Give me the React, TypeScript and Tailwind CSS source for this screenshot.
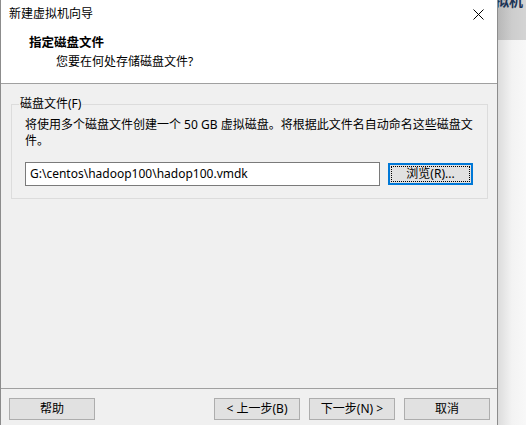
import React from "react";

const font = { fontFamily: '"Noto Sans", "Noto Sans CJK SC", sans-serif' };

function Btn({ children, className = "" }: { children: React.ReactNode; className?: string }) {
  return (
    <div
      className={
        "w-[86px] h-[22px] border border-[#adadad] bg-[#e1e1e1] flex items-center justify-center text-[12px] leading-[14px] text-black " +
        className
      }
    >
      {children}
    </div>
  );
}

export default function App() {
  return (
    <div className="w-[526px] h-[425px] flex overflow-hidden bg-white" style={font}>
      {/* dialog */}
      <div className="w-[498px] h-[425px] flex flex-col border-l border-r border-[#8c8c8c] bg-[#f0f0f0] shrink-0">
        {/* title bar */}
        <div className="h-[28px] bg-white flex items-center justify-between pl-[8px] pr-[12px]">
          <span className="text-[12px] leading-[14px] text-black">新建虚拟机向导</span>
          <svg width="11" height="11" viewBox="0 0 11 11" className="mr-[1px]">
            <path d="M0.5 0.5 L10.5 10.5 M10.5 0.5 L0.5 10.5" stroke="#000" strokeWidth="1" />
          </svg>
        </div>
        {/* header */}
        <div className="h-[56px] bg-white border-b border-[#a0a0a0] flex flex-col pt-[7px]">
          <div className="pl-[28px] text-[12.5px] leading-[16px] font-bold text-black">指定磁盘文件</div>
          <div className="pl-[55px] mt-[3px] text-[12px] leading-[16px] text-black">您要在何处存储磁盘文件?</div>
        </div>
        {/* body */}
        <div className="flex-1 flex flex-col">
          <div className="relative mt-[20px] ml-[10px] w-[477px] h-[95px] border border-[#dcdcdc] pl-[13px] pt-[12px]">
            <span className="absolute left-[7px] top-[-8px] bg-[#f0f0f0] px-[1px] text-[12px] leading-[14px] text-black">
              磁盘文件(F)
            </span>
            <div className="text-[12px] leading-[16px] text-black whitespace-nowrap">
              将使用多个磁盘文件创建一个 50 GB 虚拟磁盘。将根据此文件名自动命名这些磁盘文
              <br />
              件。
            </div>
            <div className="flex items-center mt-[13px]">
              <div className="w-[355px] h-[24px] border border-[#7a7a7a] bg-white flex items-center pl-[4px] text-[12px] leading-[14px] text-black">
                G:\centos\hadoop100\hadop100.vmdk
              </div>
              <div className="ml-[8px] w-[85px] h-[22px] border-2 border-[#0078d7] bg-[#e1e1e1] p-[1px]">
                <div className="w-full h-full border border-dotted border-black flex items-center justify-center text-[12px] leading-[14px] text-black">
                  浏览(R)...
                </div>
              </div>
            </div>
          </div>
        </div>
        {/* footer */}
        <div className="h-[37px] border-t border-[#a0a0a0] flex items-start pt-[9px] pl-[8px] pr-[7px]">
          <Btn>帮助</Btn>
          <div className="flex-1" />
          <div className="flex gap-[9px]">
            <Btn>&lt; 上一步(B)</Btn>
            <Btn>下一步(N) &gt;</Btn>
            <Btn>取消</Btn>
          </div>
        </div>
      </div>
      {/* background right */}
      <div className="flex-1 flex flex-col">
        <div className="h-[40px] bg-gradient-to-r from-[#b8b8b8] via-[#cdcdcd] to-[#d4d4d4] overflow-hidden">
          <div className="-mt-[7px] -ml-[3px] text-[14px] leading-[16px] font-bold text-[#1d3557]">拟机</div>
        </div>
        <div className="flex-1 bg-gradient-to-r from-[#dcdcdc] via-[#f3f3f3] to-[#f8f8f8]" />
      </div>
    </div>
  );
}
